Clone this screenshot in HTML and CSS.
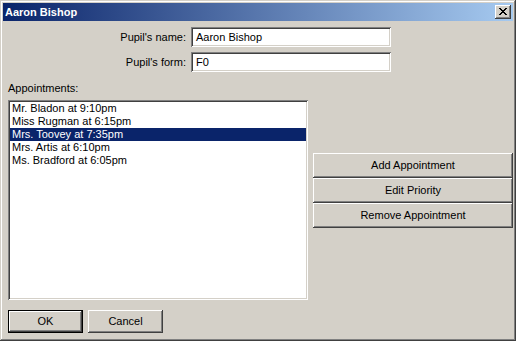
FILE: index.html
```html
<!DOCTYPE html>
<html lang="en">
<head>
  <meta charset="UTF-8">
  <title>Aaron Bishop</title>
  <link rel="stylesheet" href="styles.css">
</head>
<body>

  <div class="window">
    <div class="titlebar">
      <span class="title">Aaron Bishop</span>
      <button class="close" aria-label="Close">
        <svg width="8" height="7" viewBox="0 0 8 7" shape-rendering="crispEdges">
          <path fill="#000" d="M0 0h2v1H0zM6 0h2v1H6zM1 1h2v1H1zM5 1h2v1H5zM2 2h4v1H2zM3 3h2v1H3zM2 4h4v1H2zM1 5h2v1H1zM5 5h2v1H5zM0 6h2v1H0zM6 6h2v1H6z"/>
        </svg>
      </button>
    </div>

    <div class="content">
      <div class="fields">
        <label>Pupil's name:</label>
        <div class="field">Aaron Bishop</div>
        <label>Pupil's form:</label>
        <div class="field">F0</div>
      </div>

      <div class="list-label">Appointments:</div>
      <div class="main">
        <ul class="listbox">
          <li>Mr. Bladon at 9:10pm</li>
          <li>Miss Rugman at 6:15pm</li>
          <li class="selected">Mrs. Toovey at 7:35pm</li>
          <li>Mrs. Artis at 6:10pm</li>
          <li>Ms. Bradford at 6:05pm</li>
        </ul>
        <div class="actions">
          <button class="btn wide">Add Appointment</button>
          <button class="btn wide">Edit Priority</button>
          <button class="btn wide">Remove Appointment</button>
        </div>
      </div>

      <div class="footer">
        <button class="btn default">OK</button>
        <button class="btn">Cancel</button>
      </div>
    </div>
  </div>

</body>
</html>
```

FILE: styles.css
```css
* {
  box-sizing: border-box;
  margin: 0;
  padding: 0;
}
body {
  background: #d4d0c8;
  font: 11px/13px "Liberation Sans", Arial, sans-serif;
  color: #000;
}
.window {
  width: 516px;
  height: 341px;
  padding: 3px;
  background: #d4d0c8;
  box-shadow:
    inset -1px -1px #404040,
    inset 1px 1px #d4d0c8,
    inset -2px -2px #808080,
    inset 2px 2px #fff;
}
.titlebar {
  height: 18px;
  display: flex;
  align-items: center;
  justify-content: space-between;
  padding: 0 2px 0 2px;
  background: linear-gradient(to right, #0a246a, #a6caf0);
}
.title {
  color: #fff;
  font-weight: bold;
}
.close {
  width: 16px;
  height: 14px;
  border: none;
  background: #d4d0c8;
  display: flex;
  align-items: center;
  justify-content: center;
  padding: 0 0 1px 0;
  box-shadow:
    inset -1px -1px #404040,
    inset 1px 1px #fff,
    inset -2px -2px #808080,
    inset 2px 2px #d4d0c8;
}
.content {
  padding: 6px 0 0 5px;
}
.fields {
  display: grid;
  grid-template-columns: 178px 200px;
  column-gap: 5px;
  row-gap: 5px;
}
.fields label {
  text-align: right;
  align-self: center;
}
.field,
.listbox {
  background: #fff;
  box-shadow:
    inset 1px 1px #808080,
    inset -1px -1px #fff,
    inset 2px 2px #404040,
    inset -2px -2px #d4d0c8;
}
.field {
  height: 20px;
  padding: 4px 3px 0 5px;
}
.list-label {
  margin: 10px 0 5px;
}
.main {
  display: flex;
  gap: 5px;
}
.listbox {
  list-style: none;
  width: 300px;
  height: 200px;
  padding: 2px;
}
.listbox li {
  height: 13px;
  padding-left: 2px;
  white-space: nowrap;
}
.listbox .selected {
  background: #0a246a;
  color: #fff;
}
.actions {
  display: flex;
  flex-direction: column;
  padding-top: 53px;
}
.btn {
  font: inherit;
  color: #000;
  width: 75px;
  height: 23px;
  border: none;
  background: #d4d0c8;
  box-shadow:
    inset -1px -1px #404040,
    inset 1px 1px #fff,
    inset -2px -2px #808080,
    inset 2px 2px #d4d0c8;
}
.btn.wide {
  width: 200px;
  height: 25px;
}
.btn.default {
  box-shadow:
    inset 0 0 0 1px #000,
    inset -2px -2px #404040,
    inset 2px 2px #fff,
    inset -3px -3px #808080;
}
.footer {
  display: flex;
  gap: 5px;
  margin-top: 10px;
}
```
